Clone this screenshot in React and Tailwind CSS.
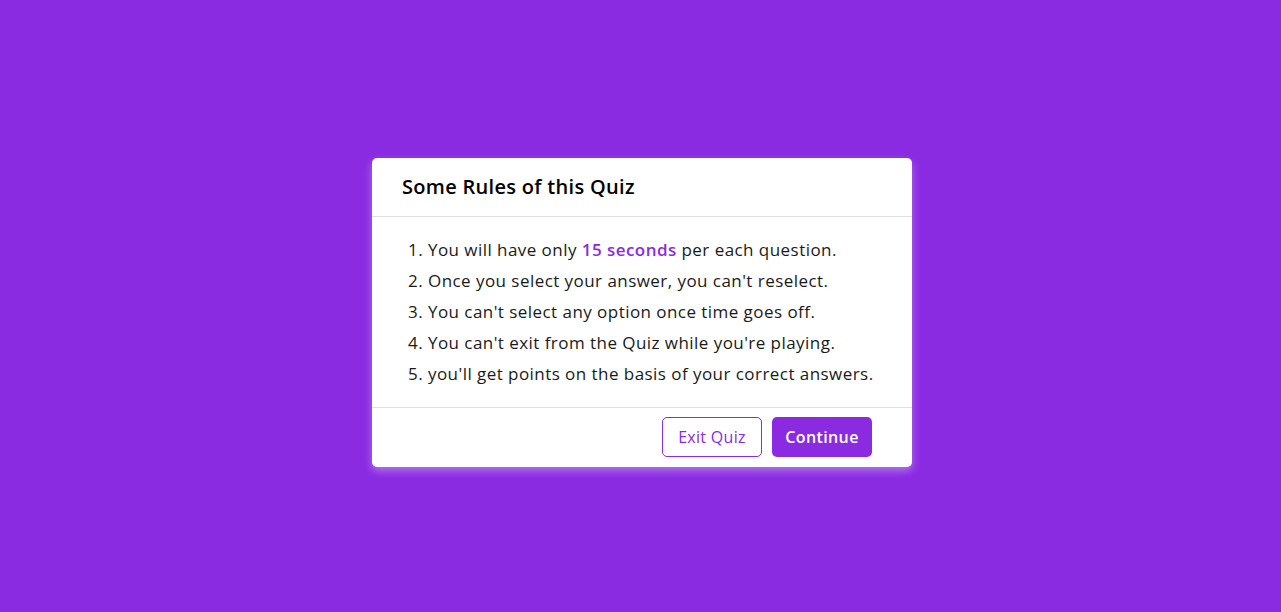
export default function App() {
  const rules = [
    <>
      1. You will have only{" "}
      <span className="font-semibold text-[#8a2be2]">15 seconds</span> per each
      question.
    </>,
    <>2. Once you select your answer, you can't reselect.</>,
    <>3. You can't select any option once time goes off.</>,
    <>4. You can't exit from the Quiz while you're playing.</>,
    <>5. you'll get points on the basis of your correct answers.</>,
  ];

  return (
    <div
      className="h-[612px] bg-[#8a2be2] flex items-center justify-center pt-3 pl-[3px]"
      style={{ fontFamily: '"Open Sans", sans-serif' }}
    >
      <div className="w-[540px] bg-white rounded-[5px] shadow-[0_4px_8px_0_rgba(255,255,255,0.35)]">
        <div className="h-[59px] flex items-center px-[30px] border-b border-[#dfdfdf]">
          <span className="text-[20px] font-semibold text-black tracking-[0.3px]">
            Some Rules of this Quiz
          </span>
        </div>
        <div className="px-[36px] pt-[17px] pb-[18px] text-[17px] leading-[31px] text-[#1a1a1a] tracking-[0.45px]">
          {rules.map((r, i) => (
            <div key={i}>{r}</div>
          ))}
        </div>
        <div className="h-[60px] flex items-center justify-end gap-[10px] px-[40px] border-t border-[#dfdfdf]">
          <button className="w-[100px] h-[40px] rounded-[5px] border border-[#8a2be2] text-[#8a2be2] text-[16px] tracking-[0.3px]">
            Exit Quiz
          </button>
          <button className="w-[100px] h-[40px] rounded-[5px] bg-[#8a2be2] text-white text-[16px] font-semibold tracking-[0.4px]">
            Continue
          </button>
        </div>
      </div>
    </div>
  );
}
